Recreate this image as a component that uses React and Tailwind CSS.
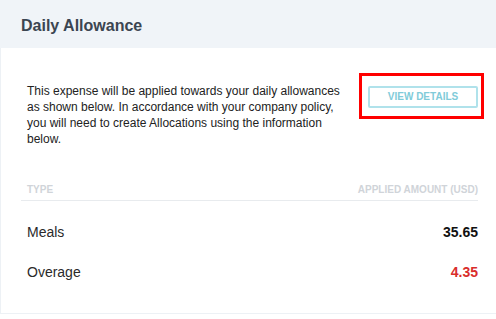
export default function App() {
  const rows = [
    { label: 'Meals', amount: '35.65', tone: 'text-[#111111]' },
    { label: 'Overage', amount: '4.35', tone: 'text-[#d92d2b]' },
  ]

  return (
    <div className="w-[496px] h-[319px] bg-white font-['Liberation_Sans',Arial,sans-serif] overflow-hidden">
      {/* Header */}
      <div className="h-[48px] bg-[#f0f4f8] pl-[21px] pt-[16px]">
        <h2 className="text-[16px] leading-[19px] font-bold text-[#3b4551]">Daily Allowance</h2>
      </div>

      {/* Body */}
      <div className="border-l border-b border-[#edf1f5] pl-[20px] pr-[18px] pt-[35px] pb-[31px]">
        <div className="flex items-start justify-between pl-[6px]">
          <p className="w-[328px] text-[12px] leading-[16px] text-[#222222]">
            This expense will be applied towards your daily allowances as shown below. In accordance with your company policy, you will need to create Allocations using the information below.
          </p>
          <div className="relative">
            <button className="w-[110px] h-[22px] rounded-[2px] border-2 border-[#b0e2eb] text-[10px] leading-[18px] font-bold text-[#80cbd9]">
              VIEW DETAILS
            </button>
            <div className="absolute -left-[9px] -top-[10px] -right-[6px] -bottom-[11px] border-[3px] border-[#ff0000] pointer-events-none" />
          </div>
        </div>

        {/* Table */}
        <div className="mt-[37px]">
          <div className="flex justify-between pl-[6px] pb-[4px] border-b border-[#e8ebee] text-[10px] leading-[12px] font-bold text-[#d0d4d9]">
            <span>TYPE</span>
            <span>APPLIED AMOUNT (USD)</span>
          </div>
          <div className="pt-[21px] flex flex-col gap-[20px]">
            {rows.map(r => (
              <div key={r.label} className="flex justify-between pl-[6px] text-[14px] leading-[20px]">
                <span className="text-[#2a2a2a]">{r.label}</span>
                <span className={`font-bold ${r.tone}`}>{r.amount}</span>
              </div>
            ))}
          </div>
        </div>
      </div>
    </div>
  )
}
